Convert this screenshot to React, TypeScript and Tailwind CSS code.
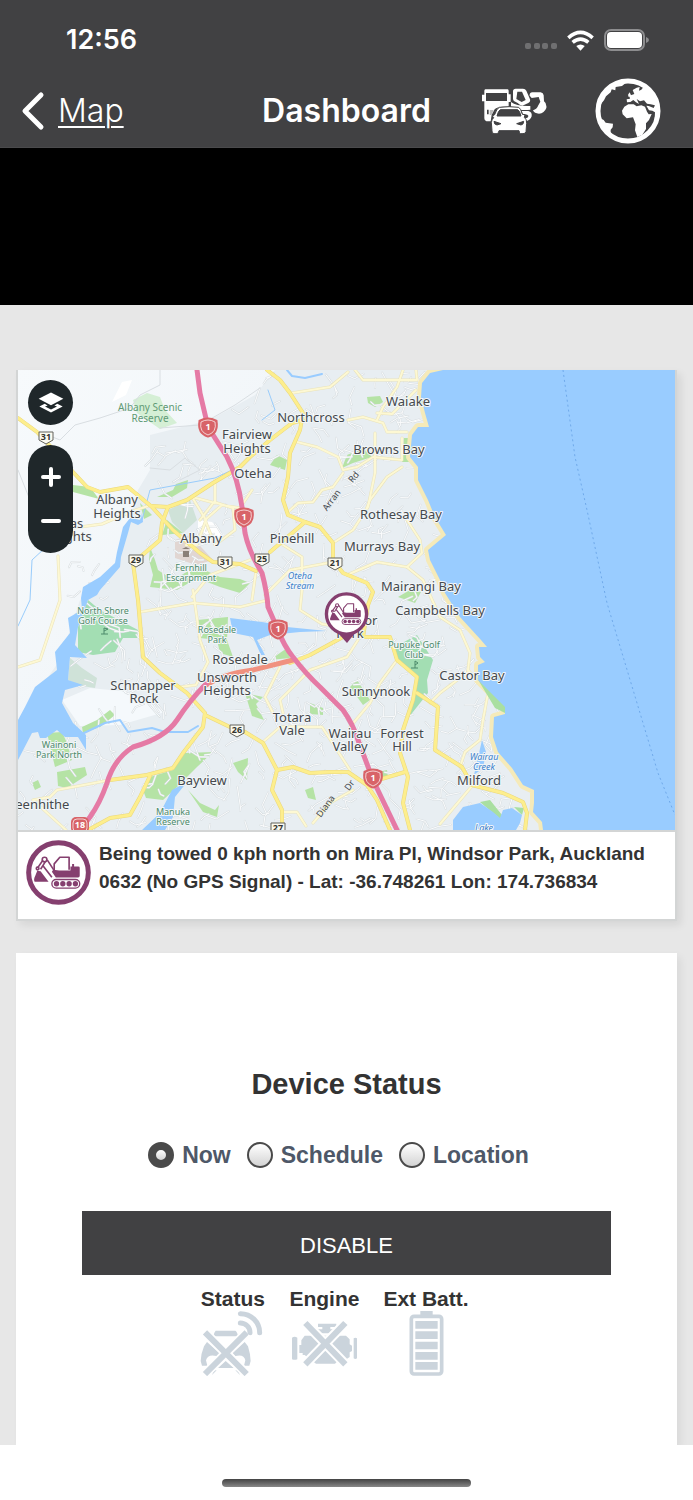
import { useState } from 'react';
import type { ReactNode } from 'react';

const MAJOR_ROADS = [
  'M18 418L37 432L52 448L73 472L87 487L100 492L128 487L152 507L173 530L200 553L213 562L240 564L256 571',
  'M133 563L160 540L162 523L168 507L187 500L213 483L240 467L250 457L270 440L292 423L303 420',
  'M152 506L168 507',
  'M133 563L138 600L143 657L160 673L187 693L205 713L203 727L183 753L173 768L147 775L110 780',
  'M150 776L140 797L130 815L110 818L90 829',
  'M205 715L230 727L245 732L263 743L277 770L272 790L282 810L282 826',
  'M277 770L293 767L310 773L330 772L348 772L367 785L377 800L390 830',
  'M267 370L280 380L290 393L303 413L300 430L290 453L288 477L283 500L288 515L305 522L320 527L333 543L333 560L343 573L367 583L373 592L368 605L363 637L390 637L397 660L417 677L413 700L403 730L400 753L408 777L403 803L410 830',
  'M417 693L438 707L435 750L462 767L472 785L503 793L523 802L527 813L525 830',
  'M305 522L270 552',
  'M290 663L310 655L343 637',
  'M378 780L405 772',
];

const MINOR_ROADS = [
  'M297 442L317 447L338 457L343 470L357 467L373 457L402 460L402 438',
  'M343 473L333 487L322 490L313 502L298 503L288 512',
  'M292 393L330 387L348 372',
  'M355 370L363 380L393 380L417 380L416 370',
  'M403 370L397 387L383 407L377 420',
  'M348 420L363 417L383 423L387 432L407 432',
  'M377 413L392 414L416 390',
  'M375 433L375 473L368 507L353 530L333 543',
  'M402 467L387 477L370 500L366 510',
  'M407 520L420 540L422 553L407 567L377 562L347 575',
  'M407 567L423 580L440 617L460 630L470 653L468 670L488 693L483 720L480 740L465 752L460 767',
  'M468 672L440 693L430 703',
  'M472 786L440 824',
  'M140 612L193 603L240 607L268 600',
  'M193 590L200 640L208 662L196 685L180 687',
  'M280 667L265 697L273 713',
  'M358 640L347 657L310 670L280 700L283 713',
  'M397 660L380 683L370 703L350 727',
  'M263 742L280 727L322 727L350 770',
  'M353 790L330 803L313 823',
  'M110 780L57 790L50 797L33 800L66 830',
  'M58 556L60 600L40 660L18 667',
  'M73 528L102 524L130 512L148 506',
  'M252 490L240 508L222 505L205 520L215 545L235 530L233 508L214 502L200 520',
  'M215 480L215 503L192 497L206 520L197 545L186 545',
  'M283 545L302 557L302 590L300 610L322 624L335 626',
  'M256 571L252 600M265 595L290 570L333 562',
  'M192 597L210 575L250 560',
  'M282 812L297 812L306 826',
];

const PARKS = [
  'M73 485L90 487L99 499L73 492Z',
  'M157 497L173 490L176 484L188 480L187 488L172 497Z',
  'M140 503L152 515L144 519Z',
  'M167 520L183 533L162 535Z',
  'M150 547L155 560L158 570L173 580L190 570L200 568L220 577L240 579L250 583L240 593L220 587L197 578L177 590L150 587L153 575L149 560Z',
  'M197 620L228 617L227 640L233 657L220 653L217 640L200 638Z',
  'M287 648L290 658L270 660Z',
  'M82 727L97 720L110 710L115 715L100 727L83 733Z',
  'M47 733L62 732L67 743L72 760L55 767Z',
  'M57 772L85 767L87 775L67 788L58 786Z',
  'M143 790L150 777L173 770L185 753L213 752L197 767L177 787L163 800L146 798Z',
  'M188 790L200 803L215 810L219 805L217 817L203 812Z',
  'M342 468L347 455L363 448L372 457L353 463Z',
  'M367 397L380 396L383 402L375 407L368 403Z',
  'M270 465L277 455L287 460L285 470Z',
  'M350 687L357 680L370 700L363 705Z',
  'M310 703L323 708L323 715L310 714Z',
  'M245 693L263 697L256 704L264 720L252 716Z',
  'M233 763L248 758L247 780L238 772Z',
  'M305 790L313 787L316 800L308 798Z',
  'M398 597L410 590L421 592L415 603Z',
  'M404 438L409 438L409 462L402 462Z',
  'M32 783L38 780L41 787L35 790Z',
  'M378 772L387 770L388 777L379 779Z',
];

const GOLF = [
  'M88 600L100 610L138 630L137 638L123 638L115 652L93 655L78 652L78 627Z',
  'M393 650L404 642L417 635L433 660L427 680L428 693L405 722L415 693L417 677L397 660Z',
];

const COAST =
  'M443 370L430 373L422 383L421 397L425 413L429 427L418 427L412 435L410 457L418 467L418 480L428 500L435 517L446 535L428 550L430 560L440 580L445 593L460 617L481 640L487 647L479 647L480 657L485 662L478 665L478 680L505 707L505 714L494 717L493 737L498 752L512 768L523 785L534 790L534 803L533 812L542 822L543 830';

const WATER = [
  'M142 513L143 522L138 525L131 522L128 533L121 557L120 567L100 590L97 595L88 600L78 627L75 645L87 658L70 657L68 680L83 685L65 690L62 703L73 723L86 735L86 750L78 737L65 737L57 730L46 738L40 738L38 732L32 733L18 760V720L25 707L35 687L57 670L55 652L70 633L68 618L82 610L81 598L83 587L100 577L115 563L117 552L123 527L130 518L140 520Z',
  'M230 618L270 623L287 627L327 631L300 632L270 635L257 640L265 655L261 655L253 637L233 633Z',
  'M142 830L160 813L172 790L187 782L175 797L173 817L165 830Z',
  'M453 830L453 820L463 807L480 803L493 812L500 818L503 810L512 808L522 815L520 823L516 830Z',
  'M482 740L477 762L474 775L483 768L486 752Z',
];

const TOWNS: [string, number, number][] = [
  ['Waiake', 408, 406],
  ['Northcross', 311, 422],
  ['Fairview', 247, 439],
  ['Heights', 247, 453],
  ['Browns Bay', 389, 454],
  ['Oteha', 253, 478],
  ['Albany', 117, 504],
  ['Heights', 117, 518],
  ['Lucas', 66, 528],
  ['Heights', 68, 541],
  ['Albany', 201, 543],
  ['Rothesay Bay', 401, 519],
  ['Pinehill', 292, 543],
  ['Murrays Bay', 382, 551],
  ['Mairangi Bay', 421, 591],
  ['Campbells Bay', 440, 615],
  ['Windsor', 352, 625],
  ['Park', 350, 638],
  ['Rosedale', 240, 664],
  ['Unsworth', 227, 682],
  ['Heights', 227, 695],
  ['Castor Bay', 472, 680],
  ['Schnapper', 143, 690],
  ['Rock', 144, 703],
  ['Sunnynook', 376, 696],
  ['Totara', 292, 722],
  ['Vale', 292, 735],
  ['Wairau', 350, 738],
  ['Valley', 350, 751],
  ['Forrest', 402, 738],
  ['Hill', 402, 751],
  ['Bayview', 202, 785],
  ['Milford', 479, 785],
  ['Greenhithe', 35, 809],
];

const PARK_LABELS: [string, number, number][] = [
  ['Fernhill', 191, 571],
  ['Escarpment', 191, 581],
  ['North Shore', 103, 614],
  ['Golf Course', 103, 624],
  ['Rosedale', 217, 633],
  ['Park', 217, 643],
  ['Pupuke Golf', 414, 648],
  ['Club', 414, 658],
  ['Wainoni', 59, 748],
  ['Park North', 59, 758],
  ['Manuka', 173, 815],
  ['Reserve', 173, 825],
];

const WATER_LABELS: [string, number, number][] = [
  ['Oteha', 300, 579],
  ['Stream', 300, 589],
  ['Wairau', 484, 760],
  ['Creek', 484, 770],
  ['Lake', 484, 831],
];

const ROUTES: [string, number, number][] = [
  ['31', 46, 437],
  ['29', 136, 560],
  ['31', 225, 562],
  ['25', 262, 559],
  ['21', 335, 563],
  ['26', 237, 730],
  ['27', 278, 828],
];

const HIGHWAY_ONE: [number, number][] = [
  [208, 427],
  [244, 517],
  [278, 629],
  [373, 778],
];

// Short residential streets, laid out from a fixed seed so they never move.
function buildStreets() {
  let seed = 7;
  const next = () => {
    seed = (seed * 16807) % 2147483647;
    return seed / 2147483647;
  };
  const streets: string[] = [];
  for (let i = 0; i < 850; i++) {
    const x = 20 + next() * 500;
    const y = 372 + next() * 456;
    const angle = next() * Math.PI;
    const length = 5 + next() * 10;
    const turn = angle + (next() - 0.5) * 2.4;
    if ((x < 150 && y < 560) || (x < 240 && y < 440)) continue;
    if (x < 75 && y < 730) continue;
    const mx = x + Math.cos(angle) * length;
    const my = y + Math.sin(angle) * length;
    const ex = mx + Math.cos(turn) * length * 0.7;
    const ey = my + Math.sin(turn) * length * 0.7;
    streets.push(`M${x.toFixed(1)} ${y.toFixed(1)}L${mx.toFixed(1)} ${my.toFixed(1)}L${ex.toFixed(1)} ${ey.toFixed(1)}`);
  }
  return streets.join('');
}

const STREETS = buildStreets();

function ExcavatorBadge() {
  return (
    <g>
      <circle r="90" fill="#fff" stroke="#853f6f" strokeWidth="15" />
      <g fill="none" stroke="#853f6f" strokeWidth="5" strokeLinejoin="round">
        <path d="M-13 -6V-26L4 -46H32V-8" />
        <path d="M-63 -14L-45 -40M-54 -10L-40 -32M-34 -38L-8 2M-48 -22L-20 14" />
        <circle cx="-42" cy="-39" r="7" fill="#fff" />
        <circle cx="-63" cy="-12" r="4" fill="#fff" />
        <rect x="-20" y="21" width="84" height="26" rx="13" strokeWidth="4" />
      </g>
      <g fill="#853f6f">
        <path d="M-16 -8L2 -6H36V-18H41V-26H47V-18H60Q64 -18 64 -14V10Q64 15 59 15H-8L-20 -2Z" />
        <path d="M-64 -5L-54 -4L-30 28H-72Q-76 22 -70 10Z" />
        <circle cx="-6" cy="34" r="8" />
        <circle cx="13" cy="34" r="8" />
        <circle cx="32" cy="34" r="8" />
        <circle cx="51" cy="34" r="8" />
      </g>
    </g>
  );
}

function MapLabels({ items, className }: { items: [string, number, number][]; className: string }) {
  return (
    <g className={className} textAnchor="middle" paintOrder="stroke" stroke="#f2f6f8" strokeWidth="2" strokeLinejoin="round">
      {items.map(([text, x, y]) => (
        <text key={`${text}-${x}-${y}`} x={x} y={y}>
          {text}
        </text>
      ))}
    </g>
  );
}

function DeviceMap() {
  return (
    <svg viewBox="18 370 657 460" className="block w-full font-['Noto_Sans',sans-serif]" role="img" aria-label="Device location">
      <defs>
        <linearGradient id="rural" x1="0" y1="0" x2="1" y2="1">
          <stop offset="0" stopColor="#f7fafc" />
          <stop offset="1" stopColor="#eef3f7" />
        </linearGradient>
      </defs>
      <rect x="18" y="370" width="657" height="460" fill="#e8eef2" />
      <path d="M18 370H275L255 395L210 420L150 435V470L138 490L120 560L80 600L60 660L18 720Z" fill="url(#rural)" />
      <path d="M62 700L90 688L130 692L165 712L120 725L80 726Z" fill="#f5f9fc" />
      <path d="M122 382L132 380L126 395L112 402Z" fill="#fff" />
      <path d="M133 400L147 393L160 397L165 410L177 423L160 429L137 413Z" fill="#d5efd5" />
      <path d="M168 510L190 500L197 520L183 533L172 522ZM70 658L82 668L97 678L95 688L82 686L68 680Z" fill="#cfe2d8" />
      <path d="M175 540L190 535L213 560L196 565L175 558Z" fill="#e1d6d2" />
      <path d="M198 520L212 522L224 535L210 542L198 532Z" fill="#fff" />
      {PARKS.map((d) => (
        <path key={d} d={d} fill="#b5e3a5" />
      ))}
      {GOLF.map((d) => (
        <path key={d} d={d} fill="#a3deb3" />
      ))}

      <g fill="none" strokeLinejoin="round" strokeLinecap="round">
        <path d={STREETS} stroke="#d8dee1" strokeWidth="2" />
        <path d={STREETS} stroke="#fbfcfd" strokeWidth="1" />
        <path
          d="M160 370V385L140 395L130 408L100 418L75 425L60 440L40 432M18 470L30 500L45 530M150 468L170 470L185 458L200 470L180 480M160 428L200 425L235 405L260 388"
          stroke="#d9dee2"
          strokeWidth="1"
        />
        <path
          d="M45 548L32 560L30 600L18 626M268 390L275 410L262 420M142 520L150 490L215 478L232 470"
          stroke="#99ccfb"
          strokeWidth="1"
        />
        <path
          d="M287 370L292 376L305 378L322 374M84 733L105 723L120 720L128 732L152 728L165 732L188 732L198 726"
          stroke="#99ccff"
          strokeWidth="2"
        />
        {MINOR_ROADS.map((d) => (
          <path key={d} d={d} stroke="#e9e3bb" strokeWidth="3" />
        ))}
        {MINOR_ROADS.map((d) => (
          <path key={d} d={d} stroke="#fdf8d3" strokeWidth="2" />
        ))}
      </g>

      <path d={COAST} fill="none" stroke="#f5eab9" strokeWidth="8" strokeLinejoin="round" />
      <path d="M477 678L507 707L507 714L495 708ZM480 802L490 800L502 815L500 819ZM514 807L524 808L522 815Z" fill="#a9dfa1" />
      <path d={`${COAST}H675V370Z`} fill="#99ccff" />
      {WATER.map((d) => (
        <path key={d} d={d} fill="#99ccff" />
      ))}
      <path
        d="M563 370L575 457L587 510L607 603L640 713L658 773L675 815"
        fill="none"
        stroke="#6fa9ea"
        strokeWidth="1"
        strokeDasharray="2 3"
      />

      <g fill="none" strokeLinejoin="round" strokeLinecap="round">
        {MAJOR_ROADS.map((d) => (
          <path key={d} d={d} stroke="#ead77c" strokeWidth="4" />
        ))}
        {MAJOR_ROADS.map((d) => (
          <path key={d} d={d} stroke="#fdee8d" strokeWidth="3" />
        ))}
        <path d="M203 687Q222 674 253 670L293 660" stroke="#f0917f" strokeWidth="5" />
        <path
          d="M80 830L90 817Q100 803 107 783Q114 759 133 747Q165 738 177 720Q190 700 206 684"
          stroke="#e57aa5"
          strokeWidth="5"
        />
        <path
          d="M197 370L200 393L208 427L227 457Q238 478 242 507L245 533Q249 552 262 573Q267 592 268 607L278 630Q284 646 293 657Q306 674 320 687L343 710Q353 724 358 740L373 780L398 832"
          stroke="#e57aa5"
          strokeWidth="5"
        />
      </g>

      <MapLabels items={TOWNS} className="fill-[#45494d] text-[13px]" />
      <MapLabels items={PARK_LABELS} className="fill-[#4c8a6a] text-[9px]" />
      <MapLabels items={WATER_LABELS} className="fill-[#3b7fcb] text-[9px] italic" />
      <g className="fill-[#5f9a74] text-[10px]" textAnchor="middle">
        <text x="150" y="411">Albany Scenic</text>
        <text x="150" y="422">Reserve</text>
      </g>
      <g className="fill-[#45494d] text-[9px]" textAnchor="middle">
        <text transform="translate(334 502) rotate(-54)">Arran</text>
        <text transform="translate(356 479) rotate(-50)">Rd</text>
        <text transform="translate(328 808) rotate(-54)">Diana</text>
        <text transform="translate(352 787) rotate(-54)">Dr</text>
      </g>
      <g fill="none" stroke="#4c8a6a" strokeWidth="1">
        <path d="M104 634V628L108 629L104 631M101 634H108M415 668V661L418 663L415 665M411 668H418" />
      </g>
      <path d="M182 549H190L186 547ZM183 551H189V557H183Z" fill="#8b8078" />

      <g className="text-[9px] font-bold" textAnchor="middle">
        {ROUTES.map(([text, x, y]) => (
          <g key={`${text}-${x}`}>
            <path d={`M${x - 7} ${y - 5}H${x + 7}V${y + 3}L${x} ${y + 7}L${x - 7} ${y + 3}Z`} fill="#fbfaf0" stroke="#63635c" />
            <text x={x} y={y + 3} fill="#33342f">
              {text}
            </text>
          </g>
        ))}
        {HIGHWAY_ONE.map(([x, y]) => (
          <g key={y} fill="#d86368">
            <path d={`M${x - 8} ${y - 6}Q${x} ${y - 10} ${x + 8} ${y - 6}Q${x + 10} ${y + 6} ${x} ${y + 9}Q${x - 10} ${y + 6} ${x - 8} ${y - 6}Z`} stroke="#d86368" strokeWidth="3" />
            <path d={`M${x - 7} ${y - 5}Q${x} ${y - 9} ${x + 7} ${y - 5}Q${x + 9} ${y + 5} ${x} ${y + 8}Q${x - 9} ${y + 5} ${x - 7} ${y - 5}Z`} stroke="#fff" strokeWidth=".7" />
            <text x={x} y={y + 3} fill="#fff">
              1
            </text>
          </g>
        ))}
        <rect x="71" y="817" width="18" height="16" rx="5" fill="#d86368" />
        <rect x="73" y="819" width="14" height="13" rx="4" fill="none" stroke="#fff" strokeWidth=".7" />
        <text x="80" y="828" fill="#fff">
          18
        </text>
      </g>

      <path d="M337 632H356L347 643Z" fill="#853f6f" />
      <g transform="translate(346.5 614) scale(.223)">
        <ExcavatorBadge />
      </g>
    </svg>
  );
}

function VehiclesIcon() {
  return (
    <svg viewBox="127 266 195 138" className="h-[46px] w-[65px]" fill="#fff" aria-hidden="true">
      <path fillRule="evenodd" d="M228 268H250Q257 268 260 274L271 300Q273 308 266 311L248 319Q240 318 234 311L224 306Q220 303 220 298V276Q220 268 228 268ZM233 277H247L258 302L246 308L230 299Z" />
      <path d="M270 289Q269 280 278 279H303Q311 280 312 288L313 306Q322 312 320 326Q314 342 298 343Q284 343 280 333Q292 330 296 318L302 307L297 293L276 296Z" />
      <path d="M214 308Q232 322 272 320V331Q240 336 214 322ZM246 335H266Q278 338 276 351Q272 365 256 366L254 357Q266 357 266 349Q264 343 250 345Z" />
      <path fillRule="evenodd" d="M137 270H204Q207 270 207 275V285H213V308H207V322H190Q172 322 165 330L156 346L153 366H140Q134 365 134 357V306H127V286H134V275Q134 270 137 270ZM139 281V305H202V281ZM142 331V345H147V331Z" />
      <path d="M150 332H162L156 347H150Z" fill="#bbb" />
      <path stroke="#414143" strokeWidth="3" fillRule="evenodd" d="M179 324Q209 320 237 324Q243 326 248 345L256 346L254 354Q262 360 261 372L259 397Q258 403 250 403H243Q239 402 238 394H178Q177 402 172 403H163Q156 402 157 394L155 370Q156 360 162 355L158 350L165 346Q171 327 179 324ZM182 331Q176 333 172 350H244Q240 333 234 331ZM163 366Q163 376 172 377L184 373ZM252 366L231 373L244 377Q252 376 252 366Z" />
    </svg>
  );
}

function GlobeIcon() {
  return (
    <svg viewBox="465 236 198 198" className="size-[66px]" fill="#fff" aria-hidden="true">
      <circle cx="564" cy="335" r="90" fill="none" stroke="#fff" strokeWidth="15" />
      <path d="M478 320L492 303L498 291L512 279L515 270L526 273L527 263L546 260L560 249L530 247L500 265L480 300Z" />
      <path d="M480 356L491 362L497 370L519 373L518 384L512 391L512 405L500 399L484 378Z" />
      <path d="M553 322L565 315L581 315L590 321L604 318L615 322L621 337L626 345L635 344L627 362L618 372L618 389L607 406L592 413L585 393L587 375L579 354L560 357L548 345L546 334Z" />
      <path d="M583 284L578 272L590 265L599 263L597 274L604 271L611 262L620 267L640 290L652 325L650 360L640 382L644 360L645 339L637 334L627 333L619 319L626 320L641 326L645 318L632 315L621 313L612 303L600 306L590 299L597 314L588 309L580 302L571 308L561 309L560 300L570 298L568 289Z" />
      <path d="M564 286L569 279L574 290L566 293Z" />
    </svg>
  );
}

function StatusIcon() {
  return (
    <svg viewBox="62 112 195 195" className="size-[65px]" fill="#cbd4dc" aria-hidden="true">
      <path d="M109 171H168Q174 174 176 188H103Q104 175 109 171ZM83 205L120 238L112 247Q85 240 80 260L84 276H68L64 262Q65 240 74 218ZM196 205L206 218Q213 240 214 262L210 276H194L198 260Q194 240 168 247L160 238ZM139 262L163 283H116ZM98 304L112 290H104ZM182 304L168 290H176Z" />
      <g fill="none" stroke="#cbd4dc" strokeWidth="15" strokeLinecap="round">
        <path d="M183 120A57 57 0 0 1 241 177" />
        <path d="M183 148A29 29 0 0 1 212 177" />
      </g>
      <path d="M77 176L202 301M202 176L77 301" stroke="#fff" strokeWidth="28" />
      <path d="M77 176L202 301M202 176L77 301" stroke="#cbd4dc" strokeWidth="18" />
    </svg>
  );
}

function EngineIcon() {
  return (
    <svg viewBox="333 112 195 195" className="size-[65px]" fill="#cbd4dc" aria-hidden="true">
      <path d="M333 192Q341 187 349 192V257Q341 260 333 257ZM518 194Q523 191 528 194V254Q523 258 518 254ZM411 150H466V160H448V167H475V179H390V167H424V160H411ZM371 186H495L506 197V212L513 216V232L506 236V250L488 262H470L462 270H405L371 244H365V238H355V214H361V200Z" />
      <path d="M373 148L493 272M493 148L373 272" stroke="#fff" strokeWidth="30" />
      <path d="M373 148L493 272M493 148L373 272" stroke="#cbd4dc" strokeWidth="18" />
    </svg>
  );
}

function BatteryIcon() {
  return (
    <svg viewBox="638 112 195 195" className="size-[65px]" fill="#cbd4dc" aria-hidden="true">
      <path d="M717 111H754V124H717Z" />
      <rect x="690" y="128" width="91" height="173" rx="8" fill="none" stroke="#cbd4dc" strokeWidth="11" />
      <path d="M702 142H769V165H702ZM702 173H769V196H702ZM702 204H769V227H702ZM702 235H769V258H702ZM702 265H769V288H702Z" />
    </svg>
  );
}

function StatusBar() {
  return (
    <div className="flex h-[76px] items-center justify-between pt-1 pr-11 pl-[66px]">
      <span className="text-[27px] font-semibold">12:56</span>
      <div className="flex items-center gap-[10px]">
        <svg viewBox="0 0 32 6" className="mt-3 h-[6px] w-8" fill="#6f6f71" aria-hidden="true">
          <rect width="6" height="6" rx="2" />
          <rect x="9" width="6" height="6" rx="2" />
          <rect x="17" width="6" height="6" rx="2" />
          <rect x="26" width="6" height="6" rx="2" />
        </svg>
        <svg viewBox="380 85 82 64" className="h-[21px] w-[27px]" fill="none" stroke="#fff" strokeWidth="11" aria-hidden="true">
          <path d="M384 109Q421 76 458 109" />
          <path d="M397 123Q421 103 445 123" />
          <path d="M421 148L408 134Q421 124 434 134Z" fill="#fff" stroke="none" />
        </svg>
        <svg viewBox="0 0 45 22" className="h-[22px] w-[45px]" aria-hidden="true">
          <rect x="1" y="1" width="39" height="20" rx="6" fill="none" stroke="#8d8d8f" strokeWidth="2" />
          <rect x="3" y="3" width="35" height="16" rx="4" fill="#fff" />
          <path d="M42 8Q45 9 45 11Q45 13 42 14Z" fill="#8d8d8f" />
        </svg>
      </div>
    </div>
  );
}

function Header() {
  return (
    <header className="border-b border-[#4a4a4c] bg-[#414143] font-[Inter,sans-serif] text-white">
      <StatusBar />
      <nav className="grid h-[71px] grid-cols-[1fr_auto_1fr] items-center px-5 pb-0.5">
        <a href="#map" className="flex items-center gap-3 text-[32px] font-light">
          <svg viewBox="0 0 26 40" className="h-10 w-[26px]" fill="none" stroke="#fff" strokeWidth="5" strokeLinecap="round" strokeLinejoin="round" aria-hidden="true">
            <path d="M21 4L5 20L21 36" />
          </svg>
          <span className="underline decoration-2 underline-offset-4">Map</span>
        </a>
        <h1 className="text-[32px] font-semibold">Dashboard</h1>
        <div className="flex items-center justify-end gap-12 pr-3">
          <button type="button" aria-label="Vehicles">
            <VehiclesIcon />
          </button>
          <button type="button" aria-label="Globe">
            <GlobeIcon />
          </button>
        </div>
      </nav>
    </header>
  );
}

function MapControls() {
  return (
    <div className="absolute top-[10px] left-[10px] flex flex-col gap-5">
      <button type="button" aria-label="Layers" className="flex size-[45px] items-center justify-center rounded-full bg-[#1f272a]">
        <svg viewBox="112 96 78 62" className="h-[21px] w-[26px]" fill="#fff" aria-hidden="true">
          <path d="M151 97L188 116L151 135L114 116Z" />
          <path d="M132 131L116 139L151 157L186 139L170 131L161 136L169 139L151 148L133 139L141 136Z" />
        </svg>
      </button>
      <div className="flex flex-col rounded-full bg-[#1f272a] py-[10px]">
        <button type="button" aria-label="Zoom in" className="flex h-11 w-[45px] items-center justify-center">
          <svg viewBox="0 0 20 20" className="size-5" stroke="#fff" strokeWidth="4" strokeLinecap="round" aria-hidden="true">
            <path d="M10 2V18M2 10H18" />
          </svg>
        </button>
        <button type="button" aria-label="Zoom out" className="flex h-11 w-[45px] items-center justify-center">
          <svg viewBox="0 0 20 20" className="size-5" stroke="#fff" strokeWidth="4" strokeLinecap="round" aria-hidden="true">
            <path d="M2 10H18" />
          </svg>
        </button>
      </div>
    </div>
  );
}

const MODES = ['Now', 'Schedule', 'Location'];

function Indicator({ label, children }: { label: string; children: ReactNode }) {
  return (
    <div className="mr-6 flex flex-col items-center">
      <span className="text-[21px] leading-6 font-bold text-[#333]">{label}</span>
      {children}
    </div>
  );
}

export default function App() {
  const [mode, setMode] = useState('Now');

  return (
    <div className="flex min-h-screen flex-col bg-white font-['Liberation_Sans',Arial,sans-serif]">
      <Header />
      <div className="h-[157px] bg-black" />

      <main className="flex flex-1 flex-col gap-8 overflow-hidden bg-[#e7e7e7] px-4 pt-[65px]">
        <section className="border-x-2 border-b-2 border-[#d3d5d5] bg-white shadow-[4px_4px_8px_rgba(0,0,0,0.08)]">
          <div className="relative">
            <DeviceMap />
            <MapControls />
          </div>
          <div className="flex gap-2 border-t-2 border-[#d3d5d5] px-2 pt-2 pb-[14px]">
            <svg viewBox="-98 -98 196 196" className="size-[65px] shrink-0" aria-hidden="true">
              <ExcavatorBadge />
            </svg>
            <p className="text-[19px] leading-7 font-bold text-[#333]">
              Being towed 0 kph north on Mira Pl, Windsor Park, Auckland 0632 (No GPS Signal) - Lat: -36.748261 Lon: 174.736834
            </p>
          </div>
        </section>

        <section className="flex flex-1 flex-col items-center bg-white pt-[111px] shadow-[4px_4px_8px_rgba(0,0,0,0.06)]">
          <h2 className="text-[29px] leading-10 font-bold text-[#333]">Device Status</h2>
          <fieldset className="mt-[34px] flex h-9 items-center">
            <legend className="sr-only">Apply</legend>
            {MODES.map((name) => (
              <label key={name} className="mr-4 flex items-center gap-2 text-[23px] font-bold text-[#4e5868]">
                <input
                  type="radio"
                  name="mode"
                  checked={mode === name}
                  onChange={() => setMode(name)}
                  className="size-[26px] appearance-none rounded-full border-2 border-[#4a4a4a] bg-linear-to-b from-white to-[#d4d4d4] checked:border-8"
                />
                {name}
              </label>
            ))}
          </fieldset>
          <button type="button" className="mt-[37px] h-16 w-4/5 bg-[#414143] pt-1 text-[22px] text-white">
            DISABLE
          </button>
          <div className="mt-3 flex pb-16">
            <Indicator label="Status">
              <StatusIcon />
            </Indicator>
            <Indicator label="Engine">
              <EngineIcon />
            </Indicator>
            <Indicator label="Ext Batt.">
              <BatteryIcon />
            </Indicator>
          </div>
        </section>
      </main>

      <footer className="flex h-[55px] items-end justify-center pb-[13px]">
        <div className="h-2 w-[36%] rounded-full bg-linear-to-b from-[#444] to-[#888]" />
      </footer>
    </div>
  );
}
